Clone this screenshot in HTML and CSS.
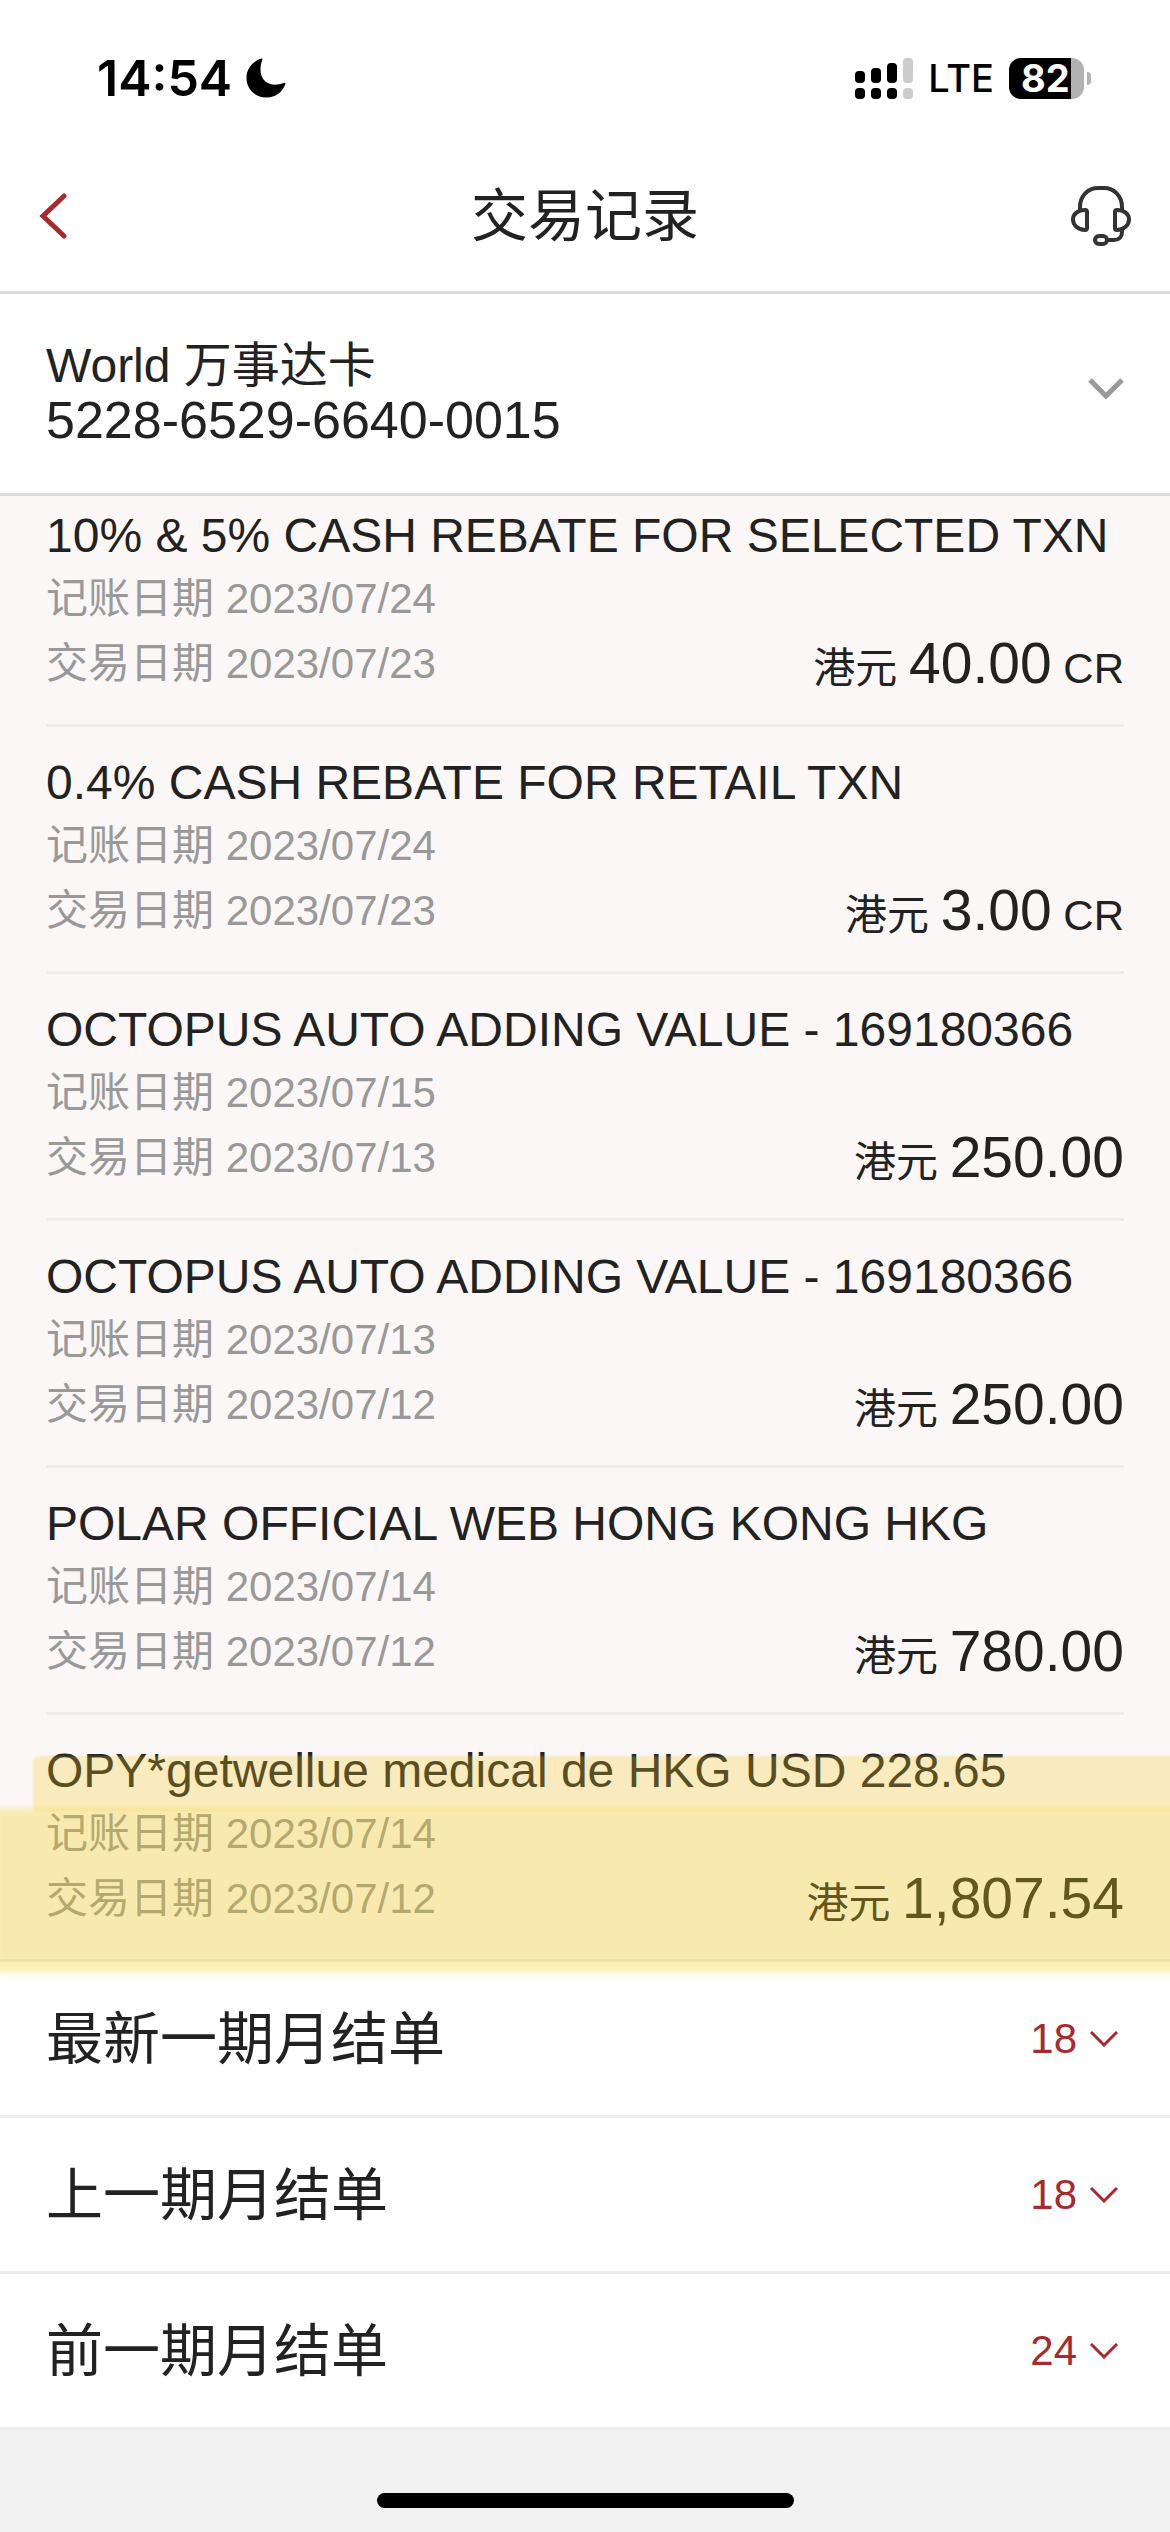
FILE: index.html
```html
<!DOCTYPE html>
<html lang="zh-CN">
<head>
  <meta charset="utf-8">
  <meta name="viewport" content="width=device-width, initial-scale=1">
  <title>交易记录</title>
  <link rel="stylesheet" href="styles.css">
</head>
<body>
  <div class="status">
    <div class="status-group status-left">
      <span class="clock">14:54</span>
      <svg class="moon" viewBox="0 0 40 40" aria-hidden="true"><path d="M15.500 0.500C16.500 0.200 16.700 0.900 16.300 1.800C12.500 12 15 21 21 24.500C26 27.500 32 27 37.500 25C39 24.500 39.700 25 39.300 26.200C36.500 34 29.500 39.500 20.500 39.500C9 39.500 0.500 31 0.500 19.500C0.500 10.500 7 3 15.500 0.500Z"/></svg>
    </div>
    <div class="status-group status-right">
      <svg class="signal" viewBox="0 0 58 41" aria-hidden="true">
        <rect x="0" y="13" width="10" height="12" rx="4"/><rect x="16" y="10" width="10" height="15" rx="4"/><rect x="32" y="5" width="10" height="20" rx="4"/><rect class="dim" x="48" y="0" width="10" height="25" rx="4"/>
        <rect x="0" y="30" width="10" height="11" rx="4"/><rect x="16" y="30" width="10" height="11" rx="4"/><rect x="32" y="30" width="10" height="11" rx="4"/><rect class="dim" x="48" y="30" width="10" height="11" rx="4"/>
      </svg>
      <span class="network">LTE</span>
      <div class="battery"><span class="battery-body">82</span><span class="battery-cap"></span></div>
    </div>
  </div>

  <header class="nav">
    <button class="nav-button" type="button" aria-label="返回">
      <svg class="back" viewBox="0 0 28 46" aria-hidden="true"><path d="M25 3L4 23L25 43"/></svg>
    </button>
    <h1 class="nav-title">交易记录</h1>
    <button class="nav-button nav-help" type="button" aria-label="客服">
      <svg class="headset" viewBox="0 0 60 60" aria-hidden="true"><path d="M9 23V21C9 10 17 2 27 2H33C43 2 51 10 51 21V23M16 26V42Q16 44 14 44C7 44 2 39 2 33.500C2 28 7 24 14 24Q16 24 16 26ZM44 26V42Q44 44 46 44C53 44 58 39 58 33.500C58 28 53 24 46 24Q44 24 44 26ZM51 44V46C51 51 48 54 43 54H36"/><rect x="24" y="50" width="12" height="8" rx="4"/></svg>
    </button>
  </header>

  <button class="account" type="button" aria-haspopup="listbox">
    <span class="account-text">
      <span class="account-name">World 万事达卡</span>
      <span class="account-number">5228-6529-6640-0015</span>
    </span>
    <svg class="account-chevron" viewBox="0 0 36 32" aria-hidden="true"><path d="M2 3L18 19L34 3"/></svg>
  </button>

  <main>
    <ul class="transactions">
      <li class="transaction">
        <h2 class="merchant">10% &amp; 5% CASH REBATE FOR SELECTED TXN</h2>
        <div class="details">
          <div class="dates"><div>记账日期 2023/07/24</div><div>交易日期 2023/07/23</div></div>
          <div class="amount"><span class="unit">港元 </span>40.00<span class="unit"> CR</span></div>
        </div>
      </li>
      <li class="transaction">
        <h2 class="merchant">0.4% CASH REBATE FOR RETAIL TXN</h2>
        <div class="details">
          <div class="dates"><div>记账日期 2023/07/24</div><div>交易日期 2023/07/23</div></div>
          <div class="amount"><span class="unit">港元 </span>3.00<span class="unit"> CR</span></div>
        </div>
      </li>
      <li class="transaction">
        <h2 class="merchant">OCTOPUS AUTO ADDING VALUE - 169180366</h2>
        <div class="details">
          <div class="dates"><div>记账日期 2023/07/15</div><div>交易日期 2023/07/13</div></div>
          <div class="amount"><span class="unit">港元 </span>250.00</div>
        </div>
      </li>
      <li class="transaction">
        <h2 class="merchant">OCTOPUS AUTO ADDING VALUE - 169180366</h2>
        <div class="details">
          <div class="dates"><div>记账日期 2023/07/13</div><div>交易日期 2023/07/12</div></div>
          <div class="amount"><span class="unit">港元 </span>250.00</div>
        </div>
      </li>
      <li class="transaction">
        <h2 class="merchant">POLAR OFFICIAL WEB HONG KONG HKG</h2>
        <div class="details">
          <div class="dates"><div>记账日期 2023/07/14</div><div>交易日期 2023/07/12</div></div>
          <div class="amount"><span class="unit">港元 </span>780.00</div>
        </div>
      </li>
      <li class="transaction marked">
        <h2 class="merchant">OPY*getwellue medical de HKG USD 228.65</h2>
        <div class="details">
          <div class="dates"><div>记账日期 2023/07/14</div><div>交易日期 2023/07/12</div></div>
          <div class="amount"><span class="unit">港元 </span>1,807.54</div>
        </div>
      </li>
    </ul>

    <div class="statements">
      <button class="statement" type="button" aria-expanded="false">
        <span class="statement-name">最新一期月结单</span>
        <span class="count">18</span>
        <svg class="statement-chevron" viewBox="0 0 28 16" aria-hidden="true"><path d="M1 1L14 14L27 1"/></svg>
      </button>
      <button class="statement" type="button" aria-expanded="false">
        <span class="statement-name">上一期月结单</span>
        <span class="count">18</span>
        <svg class="statement-chevron" viewBox="0 0 28 16" aria-hidden="true"><path d="M1 1L14 14L27 1"/></svg>
      </button>
      <button class="statement" type="button" aria-expanded="false">
        <span class="statement-name">前一期月结单</span>
        <span class="count">24</span>
        <svg class="statement-chevron" viewBox="0 0 28 16" aria-hidden="true"><path d="M1 1L14 14L27 1"/></svg>
      </button>
    </div>
  </main>

  <footer class="home"><div class="home-bar"></div></footer>
</body>
</html>
```
FILE: styles.css
```css
* {
  box-sizing: border-box;
}

body {
  margin: 0;
  min-height: 100vh;
  display: flex;
  flex-direction: column;
  overflow-x: hidden;
  background: #f1f1f1;
  color: #222;
  font-family: "Liberation Sans", "Noto Sans CJK SC", sans-serif;
}

button {
  margin: 0;
  padding: 0;
  border: 0;
  background: none;
  color: inherit;
  font: inherit;
  text-align: left;
}

svg {
  display: block;
  flex: none;
  fill: none;
}

/* Status bar */
.status {
  display: flex;
  justify-content: space-between;
  align-items: center;
  height: 141px;
  padding: 15px 79px 0 97px;
  background: #fff;
  color: #000;
  font-family: Inter, sans-serif;
}

.status-group {
  display: flex;
  align-items: center;
}

.status-left {
  gap: 14px;
}

.status-right {
  gap: 15px;
}

.clock {
  font-size: 50px;
  font-weight: 600;
  line-height: 60px;
}

.moon {
  width: 40px;
  height: 40px;
  fill: #000;
}

.signal {
  width: 58px;
  height: 41px;
  fill: #000;
}

.dim {
  fill: #ccc;
}

.network {
  font-size: 38px;
  font-weight: 500;
  line-height: 48px;
}

.battery {
  display: flex;
  align-items: center;
  gap: 3px;
}

.battery-body {
  width: 75px;
  height: 41px;
  padding-left: 12px;
  border-radius: 12px;
  background: linear-gradient(to right, #000 62px, #b3b3b3 62px);
  color: #fff;
  font-size: 38px;
  font-weight: 700;
  line-height: 41px;
}

.battery-cap {
  width: 4px;
  height: 13px;
  border-radius: 0 4px 4px 0;
  background: #b3b3b3;
}

/* Navigation */
.nav {
  display: grid;
  grid-template-columns: 1fr auto 1fr;
  align-items: center;
  height: 153px;
  padding: 0 39px;
  border-bottom: 3px solid #dcdcdc;
  background: #fff;
}

.nav-title {
  margin: 0;
  font-size: 57px;
  font-weight: 400;
  line-height: 72px;
}

.nav-help {
  justify-self: end;
}

.back {
  width: 28px;
  height: 46px;
  stroke: #a82a2e;
  stroke-width: 5;
  stroke-linecap: round;
}

.headset {
  width: 60px;
  height: 60px;
  stroke: #333;
  stroke-width: 4;
  stroke-linecap: round;
}

/* Account picker */
.account {
  display: flex;
  justify-content: space-between;
  align-items: center;
  width: 100%;
  padding: 45px 46px 46px;
  border-bottom: 3px solid #dcdcdc;
  background: #fff;
}

.account-text {
  display: flex;
  flex-direction: column;
  line-height: 54px;
}

.account-name {
  font-size: 48px;
}

.account-number {
  font-size: 52px;
}

.account-chevron {
  width: 36px;
  height: 32px;
  stroke: #999;
  stroke-width: 5;
}

/* Transactions */
.transactions {
  margin: 0;
  padding: 0;
  list-style: none;
  background: #fbf7f6;
  border-bottom: 3px solid #ededed;
}

.transaction {
  margin: 0 46px;
  padding: 26px 0 28px;
  border-bottom: 3px solid #efedec;
}

.transaction:first-child {
  padding-top: 10px;
}

.transaction:last-child {
  border-bottom: 0;
}

.merchant {
  margin: 0;
  font-size: 48px;
  font-weight: 400;
  line-height: 60px;
  white-space: nowrap;
}

.details {
  display: flex;
  justify-content: space-between;
  align-items: flex-end;
  line-height: 65px;
}

.dates {
  color: #999;
  font-size: 42px;
}

.amount {
  font-size: 57px;
}

.unit {
  font-size: 42px;
  line-height: 42px;
}

/* Highlighter strokes over the marked transaction */
.marked {
  position: relative;
}

.marked::before,
.marked::after {
  content: "";
  position: absolute;
  z-index: 1;
  right: -56px;
  pointer-events: none;
}

.marked::before {
  top: 41px;
  left: -13px;
  height: 56px;
  border-radius: 6px;
  background: rgba(244, 203, 37, 0.27);
  filter: blur(1px);
}

.marked::after {
  top: 94px;
  bottom: -14px;
  left: -50px;
  background: rgba(242, 205, 15, 0.31);
  filter: blur(3px);
}

/* Statements */
.statement {
  display: flex;
  align-items: center;
  width: 100%;
  height: 156px;
  padding: 0 52px 0 46px;
  border-bottom: 3px solid #ededed;
  background: #fff;
}

.statement-name {
  flex: 1;
  font-size: 57px;
  line-height: 72px;
}

.count {
  margin-right: 13px;
  color: #a82a2e;
  font-size: 42px;
  line-height: 48px;
}

.statement-chevron {
  width: 28px;
  height: 16px;
  stroke: #a82a2e;
  stroke-width: 3;
}

/* Home indicator */
.home {
  flex: 1;
  display: flex;
  justify-content: center;
  align-items: flex-end;
  padding: 24px;
}

.home-bar {
  width: 417px;
  height: 15px;
  border-radius: 8px;
  background: #000;
}
```
